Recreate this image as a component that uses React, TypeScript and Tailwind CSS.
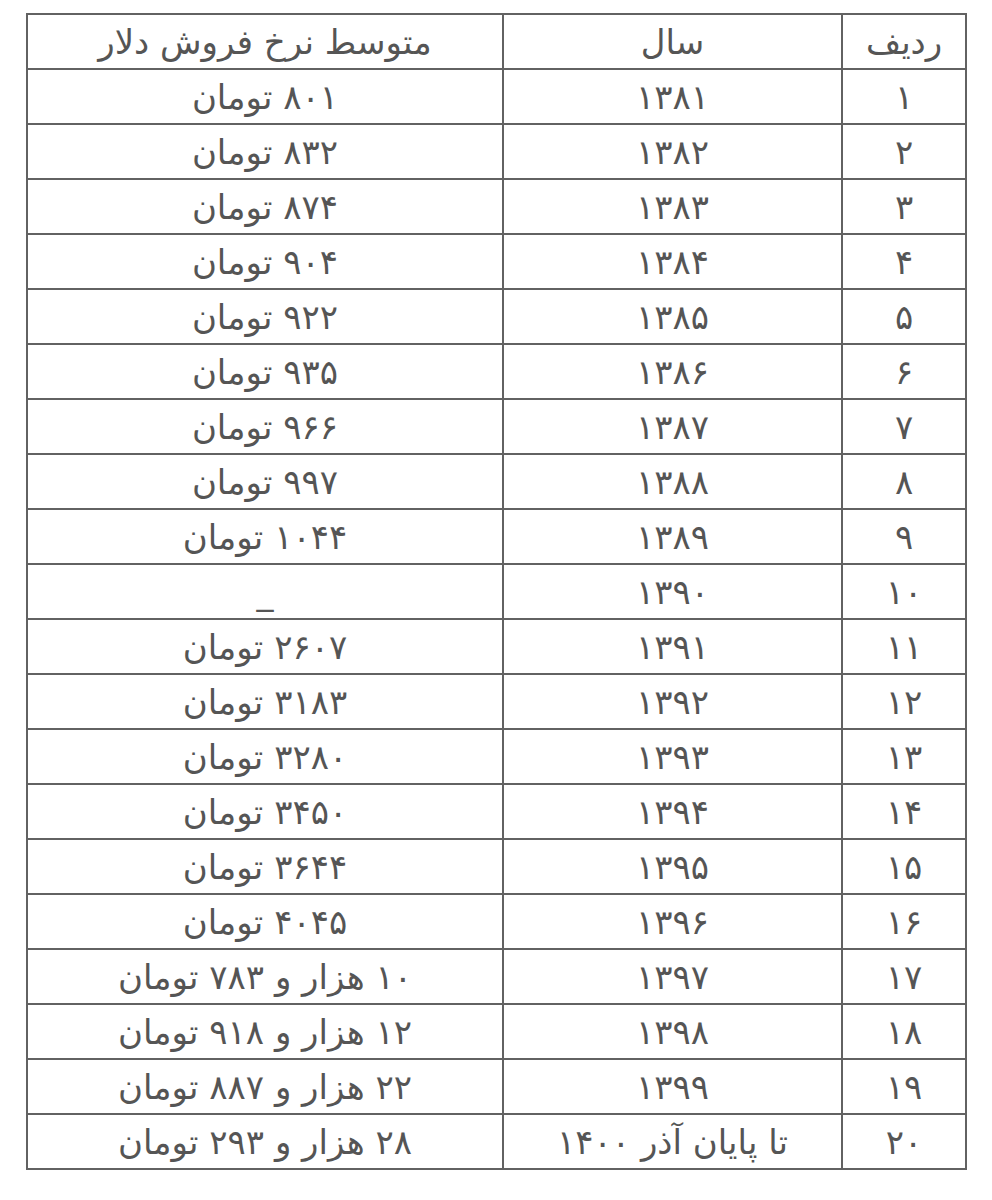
const rows: [string, string, string][] = [
  ["۱", "۱۳۸۱", "۸۰۱ تومان"],
  ["۲", "۱۳۸۲", "۸۳۲ تومان"],
  ["۳", "۱۳۸۳", "۸۷۴ تومان"],
  ["۴", "۱۳۸۴", "۹۰۴ تومان"],
  ["۵", "۱۳۸۵", "۹۲۲ تومان"],
  ["۶", "۱۳۸۶", "۹۳۵ تومان"],
  ["۷", "۱۳۸۷", "۹۶۶ تومان"],
  ["۸", "۱۳۸۸", "۹۹۷ تومان"],
  ["۹", "۱۳۸۹", "۱۰۴۴ تومان"],
  ["۱۰", "۱۳۹۰", "_"],
  ["۱۱", "۱۳۹۱", "۲۶۰۷ تومان"],
  ["۱۲", "۱۳۹۲", "۳۱۸۳ تومان"],
  ["۱۳", "۱۳۹۳", "۳۲۸۰ تومان"],
  ["۱۴", "۱۳۹۴", "۳۴۵۰ تومان"],
  ["۱۵", "۱۳۹۵", "۳۶۴۴ تومان"],
  ["۱۶", "۱۳۹۶", "۴۰۴۵ تومان"],
  ["۱۷", "۱۳۹۷", "۱۰ هزار و ۷۸۳ تومان"],
  ["۱۸", "۱۳۹۸", "۱۲ هزار و ۹۱۸ تومان"],
  ["۱۹", "۱۳۹۹", "۲۲ هزار و ۸۸۷ تومان"],
  ["۲۰", "تا پایان آذر ۱۴۰۰", "۲۸ هزار و ۲۹۳ تومان"],
];

const cell = "border-2 border-[#626262] text-center align-middle p-0 leading-none";

export default function App() {
  return (
    <div className="bg-white w-[992px] h-[1200px] pt-[13px] pl-[26px]">
      <table
        dir="rtl"
        className="border-collapse w-[941px] text-[#555] text-[34px] font-['DejaVu_Sans','Noto_Sans',sans-serif]"
      >
        <colgroup>
          <col className="w-[124px]" />
          <col className="w-[340px]" />
          <col className="w-[477px]" />
        </colgroup>
        <thead>
          <tr className="h-[55px]">
            <th className={cell + " font-normal"}>ردیف</th>
            <th className={cell + " font-normal"}>سال</th>
            <th className={cell + " font-normal"}>متوسط نرخ فروش دلار</th>
          </tr>
        </thead>
        <tbody>
          {rows.map(([n, year, rate]) => (
            <tr key={n} className="h-[55px]">
              <td className={cell}>{n}</td>
              <td className={cell}>{year}</td>
              <td className={cell}>{rate}</td>
            </tr>
          ))}
        </tbody>
      </table>
    </div>
  );
}
